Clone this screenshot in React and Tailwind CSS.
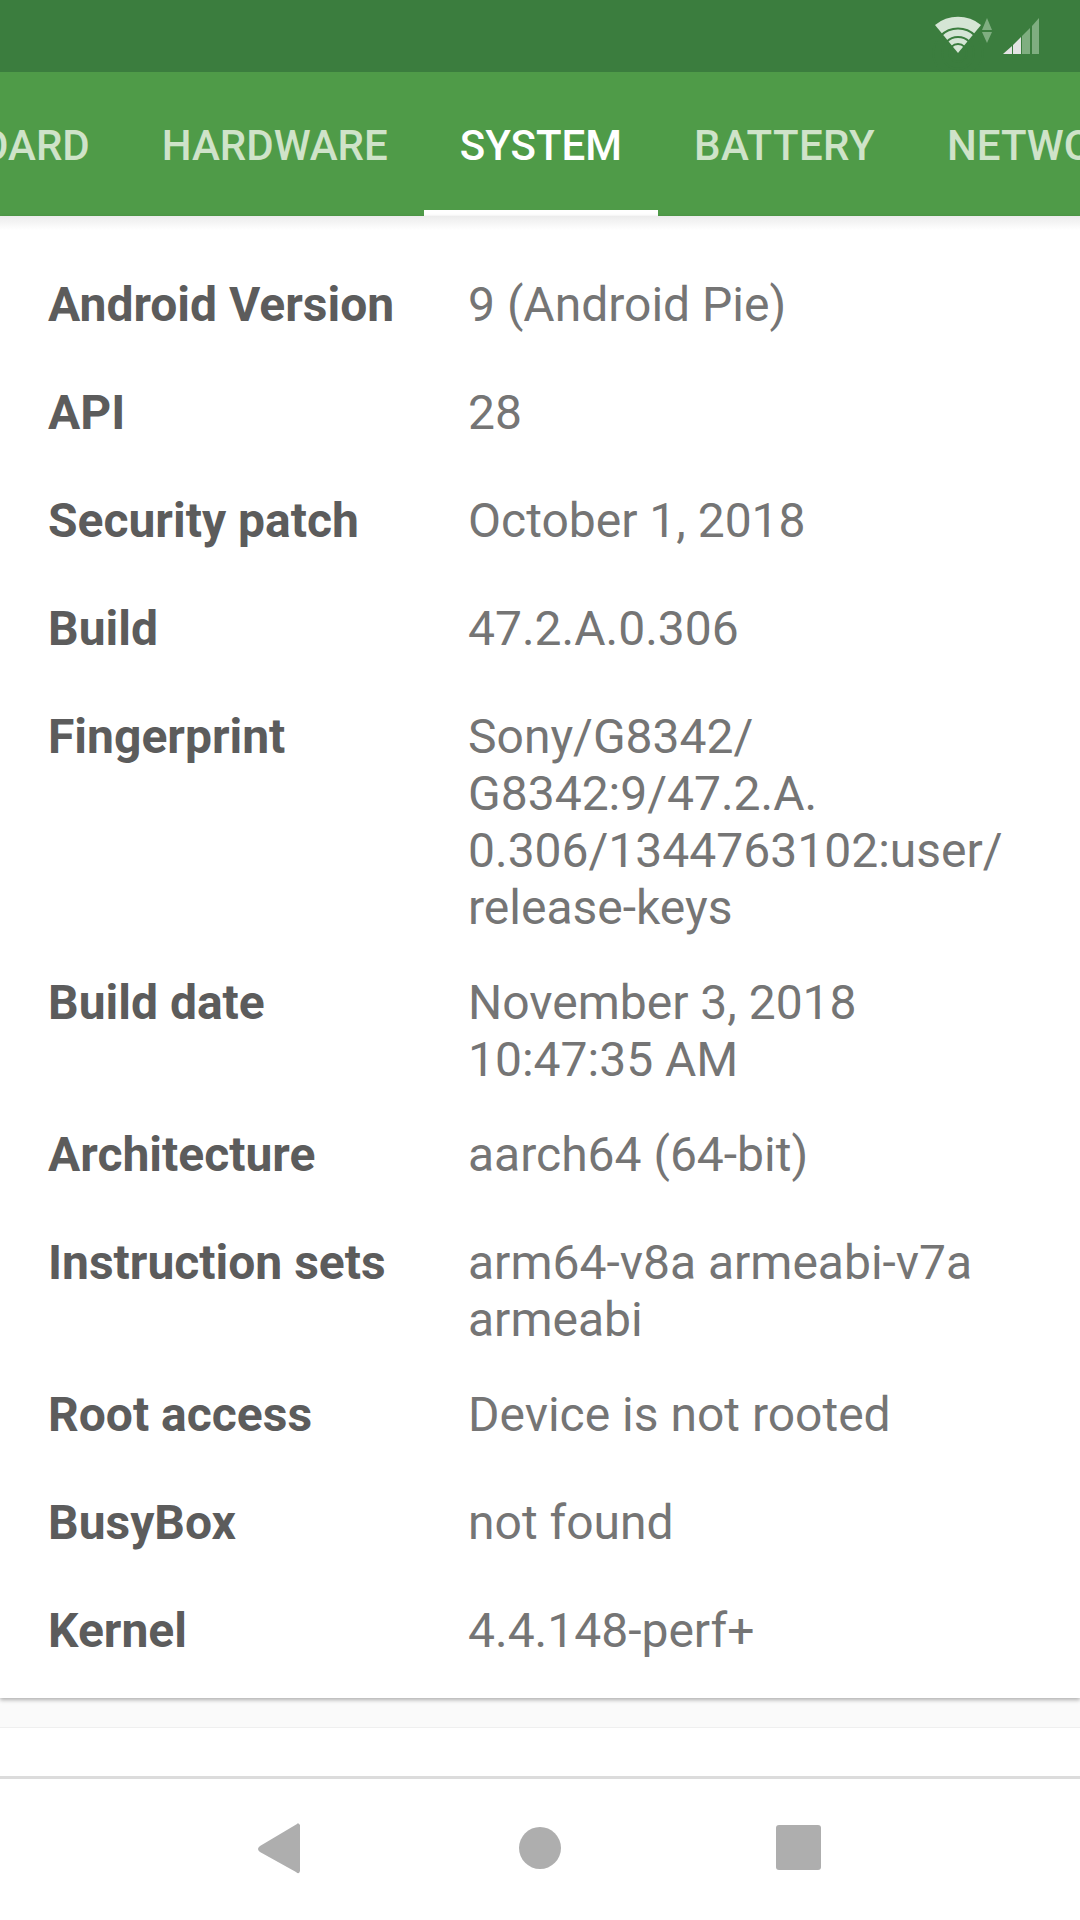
const rows = [
  ["Android Version", ["9 (Android Pie)"]],
  ["API", ["28"]],
  ["Security patch", ["October 1, 2018"]],
  ["Build", ["47.2.A.0.306"]],
  ["Fingerprint", ["Sony/G8342/", "G8342:9/47.2.A.", "0.306/1344763102:user/", "release-keys"]],
  ["Build date", ["November 3, 2018", "10:47:35 AM"]],
  ["Architecture", ["aarch64 (64-bit)"]],
  ["Instruction sets", ["arm64-v8a armeabi-v7a", "armeabi"]],
  ["Root access", ["Device is not rooted"]],
  ["BusyBox", ["not found"]],
  ["Kernel", ["4.4.148-perf+"]],
];
const tabs = ["DASHBOARD", "HARDWARE", "SYSTEM", "BATTERY", "NETWORK"];

export default function App() {
  return (
    <div className="w-[1080px] h-[1920px] flex flex-col bg-white overflow-hidden font-['Roboto',sans-serif]">
      <div className="h-[72px] shrink-0 bg-[#3b7d3e] flex justify-end items-start">
        <svg width="180" height="72" viewBox="900 0 180 72">
          <path d="M958 53 L935 25 A36 36 0 0 1 981 25 Z" fill="#d5e5d5" />
          <circle cx="958" cy="53" r="24.5" stroke="#3b7d3e" strokeWidth="2" fill="none" />
          <circle cx="958" cy="53" r="16" stroke="#3b7d3e" strokeWidth="2" fill="none" />
          <circle cx="958" cy="53" r="9" stroke="#3b7d3e" strokeWidth="2" fill="none" />
          <path d="M982 30 L987 18 L992 30 Z M982 32 L992 32 L987 43 Z" fill="#7fae80" />
          <path d="M1003 54 L1012 46 L1012 54 Z M1013 54 L1013 45 L1021 37 L1021 54 Z" fill="#e4e4e4" />
          <path d="M1022 54 L1022 36 L1030 28 L1030 54 Z M1032 54 L1032 26 L1039 18 L1039 54 Z" fill="#7fae80" />
        </svg>
      </div>
      <div className="h-[144px] shrink-0 bg-[#4f9b48] flex overflow-hidden relative">
        <div className="flex shrink-0 ml-[-193px]">
          {tabs.map((t) => (
            <div
              key={t}
              className={`relative shrink-0 h-[144px] px-[36px] pt-[2px] flex items-center text-[42px] font-medium whitespace-nowrap ${t === "SYSTEM" ? "text-white" : "text-[#cfe3c9]"} ${t === "BATTERY" ? "tracking-[0.4px]" : ""}`}
            >
              {t}
              {t === "SYSTEM" && <div className="absolute left-0 right-0 bottom-0 h-[6px] bg-white" />}
            </div>
          ))}
        </div>
      </div>
      <div className="h-[1482px] shrink-0 bg-white pt-[60px] shadow-[0_2px_4px_rgba(0,0,0,0.3)] relative">
        <div className="absolute left-0 right-0 top-0 h-[14px] bg-gradient-to-b from-[#ececec] to-white" />
        <div className="relative flex flex-col">
          {rows.map(([label, lines]) => (
            <div key={label} className="flex min-h-[108px] pl-[48px] pb-[38px] leading-[57px] text-[48px]">
              <div className="w-[420px] shrink-0 font-bold text-[#5c5c5c]">{label}</div>
              <div className="text-[#757575] whitespace-nowrap">
                {lines.map((l) => (
                  <div key={l}>{l}</div>
                ))}
              </div>
            </div>
          ))}
        </div>
      </div>
      <div className="h-[30px] shrink-0 bg-[#fafafa] border-b border-[#efefef]" />
      <div className="h-[48px] shrink-0 bg-white" />
      <div className="flex-1 bg-white border-t-[3px] border-[#dcdcdc] flex justify-center items-start">
        <svg width="1080" height="141" viewBox="0 1779 1080 141">
          <path d="M297 1824 Q298 1822 300 1825 L300 1871 Q299 1875 296 1872 L260 1852 Q256 1849 260 1846 Z" fill="#aeaeae" />
          <circle cx="540" cy="1848" r="21" fill="#aeaeae" />
          <rect x="776" y="1825" width="45" height="45" rx="3" fill="#aeaeae" />
        </svg>
      </div>
    </div>
  );
}
